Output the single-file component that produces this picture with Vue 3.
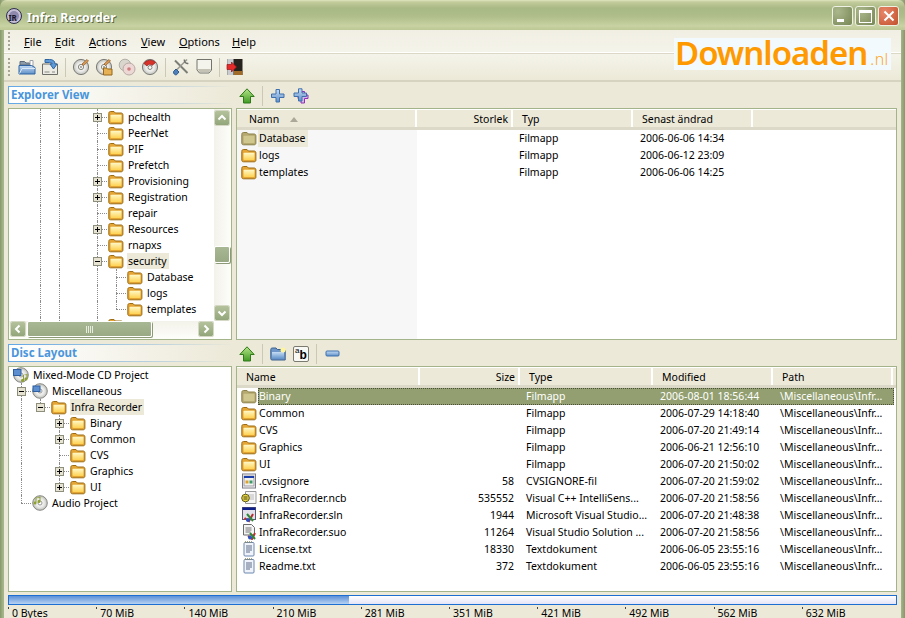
<template>
  <div class="window">
    <svg class="defs" width="0" height="0" aria-hidden="true">
      <defs>
        <linearGradient id="gFolder" x1="0" y1="0" x2="0" y2="1"><stop offset="0" stop-color="#fff8c8" /><stop offset="1" stop-color="#ffd252" /></linearGradient>
        <linearGradient id="gGreen" x1="0" y1="0" x2="0" y2="1"><stop offset="0" stop-color="#b6e58a" /><stop offset="1" stop-color="#3f9a22" /></linearGradient>
        <linearGradient id="gBlue" x1="0" y1="0" x2="0" y2="1"><stop offset="0" stop-color="#c6dcf4" /><stop offset="1" stop-color="#5f90c8" /></linearGradient>
        <radialGradient id="gDisc"><stop offset="0" stop-color="#fff" /><stop offset=".6" stop-color="#e8e8e6" /><stop offset="1" stop-color="#bcbcb8" /></radialGradient>
        <symbol id="folder" viewBox="0 0 16 16">
          <path d="M.8 4.500C.8 3 1.600 2.500 2.600 2.500H6l1.400 1.500h5.600c1.200 0 1.900.7 1.900 1.900V13c0 1.200-.7 1.800-1.800 1.800H2.500C1.400 14.800.8 14.200.8 13z" fill="#e4a534" stroke="#9c6c14" />
          <rect x="2.500" y="5.800" width="11" height="7.200" rx=".8" fill="url(#gFolder)" />
        </symbol>
        <symbol id="folder-dim" viewBox="0 0 16 16">
          <path d="M.8 4.500C.8 3 1.600 2.500 2.600 2.500H6l1.400 1.500h5.600c1.200 0 1.900.7 1.900 1.900V13c0 1.200-.7 1.800-1.800 1.800H2.500C1.400 14.800.8 14.200.8 13z" fill="#b5a970" stroke="#8a8148" />
          <rect x="2.500" y="5.800" width="11" height="7.200" rx=".8" fill="#cfc78e" />
        </symbol>
        <symbol id="up" viewBox="0 0 16 16">
          <path d="M8 .8 15.200 8.500H11.500V15H4.500V8.500H.8z" fill="url(#gGreen)" stroke="#2f7a18" stroke-linejoin="round" />
        </symbol>
        <symbol id="plus" viewBox="0 0 16 16">
          <path d="M6 1.500h3.500V6H14v3.500H9.500V14H6V9.500H1.500V6H6z" fill="url(#gBlue)" stroke="#3f70ad" stroke-linejoin="round" />
        </symbol>
        <symbol id="plus-multi" viewBox="0 0 16 16">
          <path d="M8 3.500h3.500V7H15v3.500h-3.500V15H8v-4.500H5V7h3z" fill="#d7b7ea" stroke="#9030b8" stroke-linejoin="round" />
          <path d="M5.500 .8h3.500V5h4.500v3.500H9V13H5.500V8.500H1V5h4.500z" fill="url(#gBlue)" stroke="#3f70ad" stroke-linejoin="round" />
        </symbol>
        <symbol id="minus" viewBox="0 0 16 8">
          <rect x="1" y="1" width="13" height="5" rx="1" fill="url(#gBlue)" stroke="#3f70ad" />
        </symbol>
        <symbol id="new-folder" viewBox="0 0 16 16">
          <path d="M.8 3.500C.8 2.500 1.500 2 2.200 2H6l1.300 1.500h6.200c1 0 1.700.6 1.700 1.600V14H2C1.200 14 .8 13.500.8 12.800z" fill="#6e96c8" stroke="#3a608e" />
          <path d="M2 6h12v7H2z" fill="url(#gBlue)" />
          <circle cx="13" cy="4" r="2.500" fill="#fff49a" />
        </symbol>
        <symbol id="open" viewBox="0 0 18 18">
          <path d="M2 3.500h4.500L8 5h3.500v2H2z" fill="#8d9aa8" stroke="#5c6a7a" />
          <path d="M12 2.500h3v5.500h-3z" fill="#fff" stroke="#98a0a8" />
          <path d="M1 16V7.500h12.500L17 9.500V16z" fill="url(#gBlue)" stroke="#2f64a2" />
          <path d="M1.500 15.500l2.500-5H17" fill="none" stroke="#dce9f7" />
        </symbol>
        <symbol id="save" viewBox="0 0 18 18">
          <path d="M1.500 6h15v10.500h-15z" fill="#ecebe4" stroke="#6e6e68" />
          <path d="M3.500 14h5M11 14h3" stroke="#8a8a84" />
          <path d="M4 1.500h4.500c3.500 0 5.500 1.500 5.500 4.500h2l-3.500 5L9 6h2.200C11 4.700 10 4.500 8.500 4.500H4z" fill="#5f9ad8" stroke="#2f64a2" stroke-linejoin="round" />
        </symbol>
        <symbol id="disc" viewBox="0 0 18 18">
          <circle cx="9" cy="9" r="7.600" fill="url(#gDisc)" stroke="#7c7c78" />
          <circle cx="9" cy="9" r="2.600" fill="#f6f6f2" stroke="#85857e" />
          <circle cx="9" cy="9" r=".9" fill="#8a8a84" />
        </symbol>
        <symbol id="burn" viewBox="0 0 18 18">
          <use href="#disc" width="18" height="18" />
          <path d="M10 6 15 1.500l1.500 1.500-5 4.500z" fill="#dc9a54" stroke="#8a5a26" stroke-width=".7" />
        </symbol>
        <symbol id="burn-folder" viewBox="0 0 18 18">
          <use href="#disc" width="18" height="18" />
          <path d="M9 6 14 1.500l1.500 1.500-5 4.500z" fill="#dc9a54" stroke="#8a5a26" stroke-width=".7" />
          <path d="M8.500 10h3l1 1H17v6H8.500z" fill="#e6b055" stroke="#96671b" />
        </symbol>
        <symbol id="copy" viewBox="0 0 18 18">
          <circle cx="7" cy="7" r="5.800" fill="#d9d6cd" stroke="#b0aea6" />
          <circle cx="11" cy="11" r="6" fill="#ecd7d4" stroke="#b8a9a5" />
          <circle cx="11" cy="11" r="1.800" fill="#cf7c7c" />
        </symbol>
        <symbol id="erase" viewBox="0 0 18 18">
          <circle cx="9" cy="9" r="7.600" fill="url(#gDisc)" stroke="#7c7c78" />
          <path d="M3 5.500C5 1.800 11.500 1 14.500 4.500L11 7.500C9.500 5.800 7 6 6 8z" fill="#d8322a" stroke="#8e1a16" stroke-width=".7" />
          <circle cx="9" cy="9.500" r="2" fill="#f8f8f4" stroke="#85857e" />
        </symbol>
        <symbol id="tools" viewBox="0 0 18 18">
          <path d="M3 2.500 15.500 15" stroke="#7d7d78" stroke-width="2" />
          <path d="M15 1.500 4.500 12" stroke="#9a9a94" stroke-width="1.600" />
          <path d="M12.500 1.500a3 3 0 0 0 3.800 3.800" fill="none" stroke="#70706c" stroke-width="1.500" />
          <path d="M1.500 13.500 4 11l3 3-2.500 2.800c-1.500.6-3.500-1.500-3-3.300z" fill="#4f7fb8" stroke="#2f5a90" />
        </symbol>
        <symbol id="drive" viewBox="0 0 18 18">
          <path d="M2 1.500h14.500V12L14 15H4.500L2 12z" fill="#f4f3ec" stroke="#74746c" />
          <path d="M2.500 11h13.500L14 14H4.500z" fill="#c4c2b4" />
        </symbol>
        <symbol id="exit" viewBox="0 0 18 18">
          <rect x="1.500" y="1" width="15" height="16" fill="#26221e" />
          <path d="M1.500 1h6v16h-6z" fill="#c8ccd0" />
          <path d="M8 13h8.500v4H8z" fill="#a06a28" />
          <path d="M1 6.500h4.500V4l5 5-5 5v-2.500H1z" fill="#e62a2a" stroke="#981414" stroke-width=".7" />
        </symbol>
        <symbol id="mixed" viewBox="0 0 16 16">
          <circle cx="8" cy="8" r="7.300" fill="url(#gDisc)" stroke="#888884" />
          <circle cx="8" cy="8" r="2" fill="#fff" stroke="#999" />
          <rect x=".5" y="2.500" width="7.500" height="6" fill="#5d8fd0" stroke="#2f5f9e" />
          <path d="M11 8v5.500a1.500 1.500 0 1 1-1-1.400V8l4.500-1v5a1.500 1.500 0 1 1-1-1.400V8.300z" fill="#8fa030" />
        </symbol>
        <symbol id="disc-data" viewBox="0 0 16 16">
          <circle cx="8" cy="8" r="7.300" fill="url(#gDisc)" stroke="#888884" />
          <circle cx="8" cy="8" r="2" fill="#fff" stroke="#999" />
          <rect x="1" y="3" width="7" height="5.500" fill="#5d8fd0" stroke="#2f5f9e" />
        </symbol>
        <symbol id="disc-audio" viewBox="0 0 16 16">
          <circle cx="8" cy="8" r="7.300" fill="url(#gDisc)" stroke="#888884" />
          <circle cx="8" cy="8" r="2" fill="#fff" stroke="#999" />
          <path d="M4.500 2.500v5.500a1.500 1.500 0 1 1-1-1.400V2.500L8.500 1.500v5a1.500 1.500 0 1 1-1-1.400V2.800z" fill="#8fa030" />
        </symbol>
        <symbol id="file-cvs" viewBox="0 0 16 16">
          <rect x="1.500" y="1" width="13" height="14" fill="#fff" stroke="#7a7a84" />
          <rect x="3" y="3" width="10" height="10" fill="#f2f2ee" stroke="#9a9aa4" />
          <path d="M3 3h10v2H3z" fill="#1c3ea8" />
          <path d="M4.500 7.500h3v3h-3z" fill="#e0a030" />
          <path d="M8.500 7.500h3v3h-3z" fill="#3a9a6a" />
        </symbol>
        <symbol id="file-ncb" viewBox="0 0 16 16">
          <path d="M4.500 1.500H15v12H4.500z" fill="#f6f6f6" stroke="#9a9a9a" />
          <path d="M7 4h6v6H7z" fill="#d8d8d8" />
          <circle cx="4.500" cy="8" r="3.800" fill="#ecd940" stroke="#5a5a18" />
          <path d="M2.500 7h4M2.500 9h4" stroke="#222" stroke-width=".8" />
        </symbol>
        <symbol id="file-sln" viewBox="0 0 16 16">
          <rect x="1.500" y=".5" width="13" height="12" fill="#e2e2ea" stroke="#5a5a72" />
          <path d="M1.500 .5h13V3h-13z" fill="#10208a" />
          <path d="M3.500 11 8 14l4-7" fill="none" stroke="#c02a2a" stroke-width="2" />
          <path d="M6 7l6 7" stroke="#2a8a3a" stroke-width="2" />
          <circle cx="7" cy="13" r="2" fill="#2a52c0" />
        </symbol>
        <symbol id="file-suo" viewBox="0 0 16 16">
          <path d="M2.500 .5h8l3 3V11h-11z" fill="#f4f4f4" stroke="#6a6a6a" />
          <path d="M4.500 4h6M4.500 6h6M4.500 8h5" stroke="#777" />
          <path d="M7 12l4 3 3-6" fill="none" stroke="#c02a2a" stroke-width="2" />
          <path d="M9 9l5 6" stroke="#2a8a3a" stroke-width="2" />
          <circle cx="9" cy="13.500" r="2" fill="#2a52c0" />
        </symbol>
        <symbol id="file-txt" viewBox="0 0 16 16">
          <rect x="3" y="1.500" width="10" height="13.500" rx="1" fill="#f0f4fa" stroke="#6d87ad" />
          <path d="M4 1h8" stroke="#8a8a60" stroke-dasharray="1 1" stroke-width="1.500" />
          <path d="M5 5h6M5 7h6M5 9h6M5 11h4" stroke="#5c6c88" />
        </symbol>
        <symbol id="exp-plus" viewBox="0 0 9 9">
          <rect x=".5" y=".5" width="8" height="8" fill="#e6e3d3" stroke="#8e8e7c" />
          <path d="M2 4.500h5M4.500 2v5" stroke="#000" />
        </symbol>
        <symbol id="exp-minus" viewBox="0 0 9 9">
          <rect x=".5" y=".5" width="8" height="8" fill="#e6e3d3" stroke="#8e8e7c" />
          <path d="M2 4.500h5" stroke="#000" />
        </symbol>
        <symbol id="chev-up" viewBox="0 0 10 10"><path d="M1.500 6.500 5 3l3.500 3.500" fill="none" stroke="#fff" stroke-width="2" /></symbol>
        <symbol id="chev-down" viewBox="0 0 10 10"><path d="M1.500 3.500 5 7l3.500-3.500" fill="none" stroke="#fff" stroke-width="2" /></symbol>
        <symbol id="chev-left" viewBox="0 0 10 10"><path d="M6.500 1.500 3 5l3.500 3.500" fill="none" stroke="#fff" stroke-width="2" /></symbol>
        <symbol id="chev-right" viewBox="0 0 10 10"><path d="M3.500 1.500 7 5 3.500 8.500" fill="none" stroke="#fff" stroke-width="2" /></symbol>
      </defs>
    </svg>

    <header class="titlebar">
      <svg class="app-icon" viewBox="0 0 16 16">
        <circle cx="8" cy="8" r="7.500" fill="#c4bfd6" stroke="#30304c" />
        <circle cx="8" cy="8" r="5" fill="#8e88ad" />
        <text x="2.500" y="13" class="app-icon-text">IR</text>
      </svg>
      <span class="title">Infra Recorder</span>
      <div class="win-buttons">
        <button class="win-btn"><span class="glyph-min"></span></button>
        <button class="win-btn"><span class="glyph-max"></span></button>
        <button class="win-btn close">
          <svg viewBox="0 0 12 12" width="12" height="12"><path d="M1.500 1.500l9 9M10.500 1.500l-9 9" stroke="#fff" stroke-width="2" /></svg>
        </button>
      </div>
    </header>

    <div class="client">
      <nav class="menubar">
        <span class="grip"></span>
        <span v-for="m in menus" :key="m.rest" class="menu-item" :style="{ width: m.w + 'px' }"><u>{{ m.key }}</u>{{ m.rest }}</span>
      </nav>

      <div class="toolbar">
        <span class="grip"></span>
        <template v-for="(item, i) in toolItems" :key="i">
          <span v-if="item === '|'" class="sep"></span>
          <svg v-else class="tool-icon"><use :href="'#' + item" /></svg>
        </template>
      </div>

      <div class="logo">Downloaden<span class="logo-nl">.nl</span></div>

      <main class="workspace">
        <section class="side">
          <h2 class="pane-title">Explorer View</h2>
          <div class="panel tree-panel">
            <div class="tree">
              <div v-for="(row, i) in explorerTree" :key="i" class="tree-row">
                <span v-for="(c, j) in row.cells" :key="j" class="cell" :class="c">
                  <svg v-if="c.startsWith('plus')" class="exp"><use href="#exp-plus" /></svg>
                  <svg v-if="c.startsWith('minus')" class="exp"><use href="#exp-minus" /></svg>
                </span>
                <svg class="tree-icon"><use :href="'#' + row.icon" /></svg>
                <span class="tree-label" :class="{ selected: row.sel }">{{ row.label }}</span>
              </div>
            </div>
            <div class="vbar">
              <span class="sb-btn"><svg class="chev"><use href="#chev-up" /></svg></span>
              <span class="vtrack"><span class="sb-thumb vthumb"></span></span>
              <span class="sb-btn"><svg class="chev"><use href="#chev-down" /></svg></span>
            </div>
            <div class="hbar">
              <span class="sb-btn"><svg class="chev"><use href="#chev-left" /></svg></span>
              <span class="htrack"><span class="sb-thumb hthumb"><i class="grooves"></i></span></span>
              <span class="sb-btn"><svg class="chev"><use href="#chev-right" /></svg></span>
            </div>
            <div class="sb-corner"></div>
          </div>
        </section>

        <section class="side-right">
          <div class="pane-tools">
            <svg class="pane-icon"><use href="#up" /></svg>
            <span class="sep"></span>
            <svg class="pane-icon"><use href="#plus" /></svg>
            <svg class="pane-icon"><use href="#plus-multi" /></svg>
          </div>
          <div class="panel list-panel">
            <div class="list-head upper-cols">
              <span class="col"><span class="head-name">Namn</span><span class="sort-arrow"></span></span>
              <span class="col right">Storlek</span>
              <span class="col">Typ</span>
              <span class="col">Senast ändrad</span>
            </div>
            <div class="list-body upper-body">
              <div v-for="(f, i) in upperFiles" :key="f.name" class="list-row upper-cols">
                <span class="name-cell">
                  <svg class="file-icon"><use :href="i === 0 ? '#folder-dim' : '#folder'" /></svg>
                  <span class="file-name" :class="{ soft: i === 0 }">{{ f.name }}</span>
                </span>
                <span></span>
                <span class="type">Filmapp</span>
                <span class="date">{{ f.date }}</span>
              </div>
            </div>
          </div>
        </section>

        <section class="side">
          <h2 class="pane-title">Disc Layout</h2>
          <div class="panel disc-panel">
            <div v-for="(row, i) in discTree" :key="i" class="tree-row">
              <span v-for="(c, j) in row.cells" :key="j" class="cell" :class="c">
                <svg v-if="c.startsWith('plus')" class="exp"><use href="#exp-plus" /></svg>
                <svg v-if="c.startsWith('minus')" class="exp"><use href="#exp-minus" /></svg>
              </span>
              <svg class="tree-icon"><use :href="'#' + row.icon" /></svg>
              <span class="tree-label" :class="{ selected: row.sel }">{{ row.label }}</span>
            </div>
          </div>
        </section>

        <section class="side-right">
          <div class="pane-tools">
            <svg class="pane-icon"><use href="#up" /></svg>
            <span class="sep"></span>
            <svg class="pane-icon"><use href="#new-folder" /></svg>
            <span class="rename-btn"><span class="ra">a</span><span class="rb">b</span></span>
            <span class="sep"></span>
            <svg class="pane-icon minus-icon"><use href="#minus" /></svg>
          </div>
          <div class="panel list-panel">
            <div class="list-head lower-cols">
              <span class="col">Name</span>
              <span class="col right">Size</span>
              <span class="col">Type</span>
              <span class="col">Modified</span>
              <span class="col">Path</span>
            </div>
            <div class="list-body">
              <div v-for="(f, i) in lowerFiles" :key="f.name" class="list-row lower-cols" :class="{ active: i === 0 }">
                <span class="name-cell">
                  <svg class="file-icon"><use :href="'#' + (i === 0 ? 'folder-dim' : f.icon)" /></svg>
                  <span class="file-name">{{ f.name }}</span>
                </span>
                <span class="size">{{ f.size }}</span>
                <span class="type">{{ f.type }}</span>
                <span class="date">{{ f.date }}</span>
                <span class="date">\Miscellaneous\Infr...</span>
              </div>
            </div>
          </div>
        </section>
      </main>

      <div class="progress"><div class="progress-fill" :style="{ width: fillWidth + 'px' }"></div></div>
      <div class="scale">
        <span v-for="t in ticks" :key="t" class="tick">{{ t }}</span>
      </div>
    </div>
  </div>
</template>

<script setup>
const fillWidth = 340

const menus = [
  { key: 'F', rest: 'ile', w: 31 },
  { key: 'E', rest: 'dit', w: 34 },
  { key: 'A', rest: 'ctions', w: 52 },
  { key: 'V', rest: 'iew', w: 38 },
  { key: 'O', rest: 'ptions', w: 53 },
  { key: 'H', rest: 'elp', w: 40 }
]

const toolItems = ['open', 'save', '|', 'burn', 'burn-folder', 'copy', 'erase', '|', 'tools', 'drive', '|', 'exit']

// one letter per tree column: v line, t tee, l corner, p/m expander, P/M expander closing its line
const cellNames = { ' ': 'blank', v: 'v', t: 't', l: 'l', p: 'plus', m: 'minus', P: 'plus end', M: 'minus end' }
const row = (spec, icon, label, sel = false) => ({
  cells: [...spec].map((c) => cellNames[c]),
  icon,
  label,
  sel
})

const explorerTree = [
  row(' vv p', 'folder', 'pchealth'),
  row(' vv t', 'folder', 'PeerNet'),
  row(' vv t', 'folder', 'PIF'),
  row(' vv t', 'folder', 'Prefetch'),
  row(' vv p', 'folder', 'Provisioning'),
  row(' vv p', 'folder', 'Registration'),
  row(' vv t', 'folder', 'repair'),
  row(' vv p', 'folder', 'Resources'),
  row(' vv t', 'folder', 'rnapxs'),
  row(' vv m', 'folder', 'security', true),
  row(' vv vt', 'folder', 'Database'),
  row(' vv vt', 'folder', 'logs'),
  row(' vv vl', 'folder', 'templates'),
  row(' vv t', 'folder', '')
]

const discTree = [
  row('', 'mixed', 'Mixed-Mode CD Project'),
  row('m', 'disc-data', 'Miscellaneous'),
  row('vM', 'folder', 'Infra Recorder', true),
  row('v p', 'folder', 'Binary'),
  row('v p', 'folder', 'Common'),
  row('v t', 'folder', 'CVS'),
  row('v p', 'folder', 'Graphics'),
  row('v P', 'folder', 'UI'),
  row('l', 'disc-audio', 'Audio Project')
]

const upperFiles = [
  { name: 'Database', date: '2006-06-06 14:34' },
  { name: 'logs', date: '2006-06-12 23:09' },
  { name: 'templates', date: '2006-06-06 14:25' }
]

const lowerFiles = [
  { name: 'Binary', icon: 'folder', size: '', type: 'Filmapp', date: '2006-08-01 18:56:44' },
  { name: 'Common', icon: 'folder', size: '', type: 'Filmapp', date: '2006-07-29 14:18:40' },
  { name: 'CVS', icon: 'folder', size: '', type: 'Filmapp', date: '2006-07-20 21:49:14' },
  { name: 'Graphics', icon: 'folder', size: '', type: 'Filmapp', date: '2006-06-21 12:56:10' },
  { name: 'UI', icon: 'folder', size: '', type: 'Filmapp', date: '2006-07-20 21:50:02' },
  { name: '.cvsignore', icon: 'file-cvs', size: '58', type: 'CVSIGNORE-fil', date: '2006-07-20 21:59:02' },
  { name: 'InfraRecorder.ncb', icon: 'file-ncb', size: '535552', type: 'Visual C++ IntelliSens...', date: '2006-07-20 21:58:56' },
  { name: 'InfraRecorder.sln', icon: 'file-sln', size: '1944', type: 'Microsoft Visual Studio...', date: '2006-07-20 21:48:38' },
  { name: 'InfraRecorder.suo', icon: 'file-suo', size: '11264', type: 'Visual Studio Solution ...', date: '2006-07-20 21:58:56' },
  { name: 'License.txt', icon: 'file-txt', size: '18330', type: 'Textdokument', date: '2006-06-05 23:55:16' },
  { name: 'Readme.txt', icon: 'file-txt', size: '372', type: 'Textdokument', date: '2006-06-05 23:55:16' }
]

const ticks = ['0 Bytes', '70 MiB', '140 MiB', '210 MiB', '281 MiB', '351 MiB', '421 MiB', '492 MiB', '562 MiB', '632 MiB']
</script>

<style scoped>
.defs {
  position: absolute;
}

.window {
  width: 905px;
  height: 618px;
  overflow: hidden;
  display: flex;
  flex-direction: column;
  position: relative;
  font-family: "Noto Sans", sans-serif;
  font-size: 10.5px;
  color: #000;
  background: linear-gradient(to right, #86976a, #a5b58a 3px, #a5b58a 901px, #86976a);
}

.titlebar {
  height: 30px;
  flex: none;
  box-sizing: border-box;
  display: flex;
  align-items: center;
  padding: 4px 6px 0;
  border-radius: 7px 7px 0 0;
  background: linear-gradient(to bottom, #dfe5bf 0, #c3cc9c 2px, #a9b985 8px, #aebd8a 16px, #c8d2a2 26px, #bcc895 30px);
}

.app-icon {
  width: 16px;
  height: 16px;
  margin-top: -2px;
}

.app-icon-text {
  font-size: 8px;
  font-weight: 700;
  fill: #16162a;
}

.title {
  margin-left: 5px;
  color: #fff;
  font-weight: 700;
  font-size: 12.3px;
  text-shadow: 1px 1px 0 #5f6b45;
}

.win-buttons {
  margin-left: auto;
  align-self: flex-start;
  padding-top: 2px;
  display: flex;
  gap: 2px;
}

.win-btn {
  width: 21px;
  height: 20px;
  padding: 0;
  border: 1px solid #eef1e4;
  border-radius: 3px;
  background: radial-gradient(circle at 25% 25%, #aab78c, #788755);
  display: flex;
  align-items: center;
  justify-content: center;
  position: relative;
}

.glyph-min {
  width: 7px;
  height: 3px;
  background: #fff;
  margin: 8px 5px 0 0;
}

.glyph-max {
  width: 11px;
  height: 9px;
  border: 1px solid #fff;
  border-top-width: 3px;
}

.win-btn.close {
  background: radial-gradient(circle at 30% 30%, #e8886a, #c2502c);
}

.client {
  flex: 1;
  margin: 0 4px;
  background: #ece9d8;
  display: flex;
  flex-direction: column;
  position: relative;
  min-height: 0;
}

.menubar {
  height: 23px;
  flex: none;
  display: flex;
  align-items: center;
  padding-left: 4px;
  background: linear-gradient(to bottom, #f1efe4, #f5f4ea);
  box-shadow: inset 0 -1px 0 #fff;
  border-bottom: 1px solid #dbd8c6;
}

.grip {
  width: 2px;
  height: 19px;
  margin-right: 14px;
  background: repeating-linear-gradient(to bottom, #a8a594 0 2px, transparent 2px 4px);
  flex: none;
}

.menu-item {
  display: inline-block;
  font-size: 11px;
}

.toolbar {
  height: 26px;
  flex: none;
  display: flex;
  align-items: center;
  padding-left: 4px;
  border-bottom: 2px solid #d6d3c1;
  background: linear-gradient(to bottom, #f5f4ea, #ece9d8);
}

.toolbar .grip {
  margin-right: 8px;
}

.tool-icon {
  width: 18px;
  height: 18px;
  margin-right: 5px;
  flex: none;
}

.sep {
  width: 1px;
  height: 19px;
  background: #cbc8b6;
  margin: 0 6px 0 1px;
  flex: none;
}

.logo {
  position: absolute;
  left: 670px;
  top: 8px;
  width: 217px;
  height: 32px;
  box-sizing: border-box;
  padding-left: 1px;
  background: #f3fafd;
  color: #ff9900;
  font-family: "Noto Sans", sans-serif;
  font-weight: 600;
  font-size: 33px;
  line-height: 30px;
  letter-spacing: -1px;
  white-space: nowrap;
}

.logo-nl {
  font-size: 16px;
  font-weight: 300;
  letter-spacing: .4px;
  margin-left: 3px;
  color: #ffa726;
}

.workspace {
  display: grid;
  grid-template-columns: 224px 661px;
  grid-template-rows: 254px 248px;
  column-gap: 4px;
  row-gap: 4px;
  padding: 4px 4px 0;
  flex: none;
}

.side,
.side-right {
  display: flex;
  flex-direction: column;
  min-height: 0;
  min-width: 0;
}

.pane-title {
  margin: 0 0 4px;
  height: 18px;
  flex: none;
  box-sizing: border-box;
  padding-left: 2px;
  font-size: 11.5px;
  line-height: 15px;
  font-weight: 700;
  color: #4a96dc;
  border: 1px solid;
  border-image: linear-gradient(to right, #62a7e6, #ece9d8) 1;
  border-right: 0;
  background: linear-gradient(to right, #fff, #ece9d8);
}

.panel {
  flex: 1;
  min-height: 0;
  background: #fff;
  border: 1px solid #a3b48a;
  overflow: hidden;
}

.tree-panel {
  display: grid;
  grid-template-columns: 205px 17px;
  grid-template-rows: 212px 18px;
}

.tree {
  overflow: hidden;
  padding-left: 3px;
  box-sizing: border-box;
  height: 212px;
}

.disc-panel {
  padding-left: 3px;
}

.tree-row {
  display: flex;
  height: 16px;
  line-height: 16px;
  white-space: nowrap;
}

.cell {
  width: 19px;
  height: 16px;
  flex: none;
  position: relative;
}

.cell::before,
.cell::after {
  content: "";
  position: absolute;
}

.v::before,
.t::before,
.plus::before,
.minus::before {
  left: 9px;
  top: 0;
  bottom: 0;
  border-left: 1px dotted #8c8c8c;
}

.l::before,
.plus.end::before,
.minus.end::before {
  left: 9px;
  top: 0;
  bottom: auto;
  height: 8px;
  border-left: 1px dotted #8c8c8c;
}

.t::after,
.l::after,
.plus::after,
.minus::after {
  left: 9px;
  right: 0;
  top: 8px;
  border-top: 1px dotted #8c8c8c;
}

.exp {
  position: absolute;
  left: 5px;
  top: 4px;
  width: 9px;
  height: 9px;
  z-index: 1;
}

.tree-icon {
  width: 16px;
  height: 16px;
  flex: none;
  margin-left: 1px;
}

.tree-label {
  margin-left: 3px;
  padding: 0 2px 0 1px;
  height: 16px;
}

.tree-label.selected {
  background: #ece9d8;
}

.vbar {
  grid-row: 1;
  grid-column: 2;
  display: flex;
  flex-direction: column;
  padding-top: 1px;
  background: linear-gradient(to right, #f3f2ea, #fdfdfa);
}

.hbar {
  grid-row: 2;
  grid-column: 1;
  display: flex;
  background: linear-gradient(to bottom, #f3f2ea, #fdfdfa);
  padding-left: 1px;
}

.sb-corner {
  grid-row: 2;
  grid-column: 2;
  background: #fff;
}

.sb-btn {
  width: 16px;
  height: 16px;
  flex: none;
  box-sizing: border-box;
  border: 1px solid #fff;
  border-radius: 2px;
  outline: 1px solid #d4d8c4;
  outline-offset: -1px;
  background: linear-gradient(to bottom, #b4c29c, #93a67b);
  display: flex;
  align-items: center;
  justify-content: center;
}

.chev {
  width: 10px;
  height: 10px;
}

.vtrack {
  flex: 1;
  position: relative;
  display: flex;
  flex-direction: column;
  padding-top: 120px;
}

.vthumb {
  width: 16px;
  height: 17px;
  display: block;
}

.htrack {
  flex: 1;
  display: flex;
  padding-left: 1px;
}

.hthumb {
  width: 125px;
  height: 16px;
  display: flex;
  align-items: center;
  justify-content: center;
}

.sb-thumb {
  box-sizing: border-box;
  border: 1px solid #fff;
  border-radius: 2px;
  background: linear-gradient(to bottom, #a9b894, #98a984);
  box-shadow: 1px 1px 0 #8c9a78;
}

.grooves {
  width: 7px;
  height: 7px;
  background: repeating-linear-gradient(to right, #e8ecdc 0 1px, transparent 1px 2px);
}

.pane-tools {
  height: 20px;
  margin-bottom: 2px;
  display: flex;
  align-items: center;
  padding-left: 3px;
  flex: none;
}

.pane-icon {
  width: 16px;
  height: 16px;
  margin-right: 7px;
  flex: none;
}

.pane-tools .sep {
  height: 20px;
  margin: 0 7px 0 0;
}

.minus-icon {
  height: 8px;
  margin-left: 1px;
}

.rename-btn {
  width: 16px;
  height: 16px;
  box-sizing: border-box;
  border: 1px solid #7a7a70;
  border-radius: 2px;
  background: #f8f8f4;
  margin-right: 7px;
  flex: none;
  display: flex;
  font-family: "Liberation Sans", sans-serif;
  line-height: 1;
}

.ra {
  font-size: 8px;
  margin-left: 1px;
}

.rb {
  font-size: 12px;
  font-weight: 700;
  margin-top: 2px;
}

.list-panel {
  display: flex;
  flex-direction: column;
}

.list-head {
  height: 21px;
  flex: none;
  box-sizing: border-box;
  background: #ece9d8;
  border-top: 1px solid #fff;
  box-shadow: inset 0 -3px 0 #dcd9c8;
}

.col {
  height: 17px;
  line-height: 19px;
  box-sizing: border-box;
  border-right: 2px solid #fff;
  padding-left: 9px;
  white-space: nowrap;
  overflow: hidden;
}

.col.right {
  text-align: right;
  padding-left: 0;
  padding-right: 3px;
}

.head-name {
  margin-left: 3px;
}

.sort-arrow {
  display: inline-block;
  margin-left: 11px;
  border: 4.500px solid transparent;
  border-top: 0;
  border-bottom: 5px solid #aca899;
  vertical-align: 1px;
}

.upper-cols {
  display: grid;
  grid-template-columns: 180px 96px 120px 120px 1fr;
}

.lower-cols {
  display: grid;
  grid-template-columns: 183px 100px 133px 120px 120px;
}

.list-body {
  flex: 1;
}

.upper-body {
  background: linear-gradient(to right, #f7f7f7 180px, #fff 180px);
}

.list-row {
  height: 17px;
  line-height: 17px;
  white-space: nowrap;
  position: relative;
}

.name-cell {
  display: flex;
  padding-left: 4px;
}

.file-icon {
  width: 16px;
  height: 16px;
  flex: none;
  margin-right: 1px;
}

.file-name {
  padding-left: 1px;
  padding-right: 2px;
}

.file-name.soft {
  background: #ece9d8;
}

.type {
  padding-left: 6px;
}

.date {
  padding-left: 7px;
}

.size {
  text-align: right;
  padding-right: 6px;
}

.list-row.active {
  width: 657px;
  color: #fff;
  background: linear-gradient(to right, transparent 21px, #939f70 21px);
}

.list-row.active::after {
  content: "";
  position: absolute;
  left: 21px;
  right: 0;
  top: 0;
  bottom: 0;
  border: 1px dotted #4a4f38;
}

.progress {
  height: 10px;
  margin: 3px 4px 0;
  box-sizing: border-box;
  border: 1px solid #1c6fd0;
  background: linear-gradient(to bottom, #fff, #e4e4f8);
  flex: none;
}

.progress-fill {
  height: 100%;
  background: linear-gradient(to bottom, #5b90d8, #b8d2f2);
}

.scale {
  display: flex;
  margin: 0 4px;
  height: 14px;
}

.tick {
  width: 88.2px;
  flex: none;
  box-sizing: border-box;
  padding-left: 4px;
  line-height: 17px;
  position: relative;
  white-space: nowrap;
}

.tick::before {
  content: "";
  position: absolute;
  left: 0;
  top: 2px;
  height: 2px;
  border-left: 1px solid #444;
}
</style>

<style>
body {
  margin: 0;
}
</style>
